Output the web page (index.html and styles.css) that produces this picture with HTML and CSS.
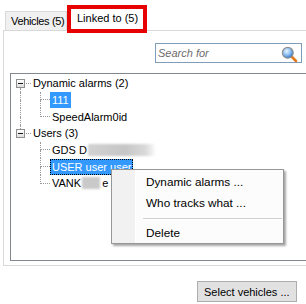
FILE: index.html
```html
<!DOCTYPE html>
<html lang="en">
<head>
    <meta charset="UTF-8">
    <title>Linked to</title>
    <link rel="stylesheet" href="styles.css">
</head>
<body>

<div class="window">
    <div class="tabs">
        <div class="tab">Vehicles (5)</div>
        <div class="tab active">Linked to (5)</div>
    </div>

    <div class="page">
        <div class="search">
            <span class="placeholder">Search for</span>
            <svg class="lens" width="17" height="17" viewBox="0 0 17 17">
                <defs>
                    <radialGradient id="glass" cx="40%" cy="35%" r="65%">
                        <stop offset="0" stop-color="#eaf4ff"/>
                        <stop offset="0.55" stop-color="#8cc0f2"/>
                        <stop offset="1" stop-color="#2f73c9"/>
                    </radialGradient>
                </defs>
                <line x1="10.5" y1="10.5" x2="15" y2="15" stroke="#e27a1c" stroke-width="2.6" stroke-linecap="round"/>
                <circle cx="6.8" cy="6.8" r="5.4" fill="url(#glass)" stroke="#8f8f8f" stroke-width="1.2"/>
            </svg>
        </div>

        <div class="tree">
            <div class="row">
                <div class="cell">
                    <div class="up"></div>
                    <div class="mid"><span class="exp"></span><span class="dash"></span></div>
                    <div class="down v"></div>
                </div>
                <span class="label">Dynamic alarms (2)</span>
            </div>
            <div class="row">
                <div class="cell"><div class="up v"></div><div class="down v"></div></div>
                <div class="cell narrow"><div class="up v h"></div><div class="down v"></div></div>
                <span class="label sel">111</span>
            </div>
            <div class="row">
                <div class="cell"><div class="up v"></div><div class="down v"></div></div>
                <div class="cell narrow"><div class="up v h"></div><div class="down"></div></div>
                <span class="label">SpeedAlarm0id</span>
            </div>
            <div class="row">
                <div class="cell">
                    <div class="up v"></div>
                    <div class="mid"><span class="exp"></span><span class="dash"></span></div>
                    <div class="down"></div>
                </div>
                <span class="label">Users (3)</span>
            </div>
            <div class="row">
                <div class="cell"></div>
                <div class="cell narrow"><div class="up v h"></div><div class="down v"></div></div>
                <span class="label">GDS D<span class="smudge wide"></span></span>
            </div>
            <div class="row">
                <div class="cell"></div>
                <div class="cell narrow"><div class="up v h"></div><div class="down v"></div></div>
                <span class="label sel focus">USER user user</span>
            </div>
            <div class="row">
                <div class="cell"></div>
                <div class="cell narrow"><div class="up v h"></div><div class="down"></div></div>
                <span class="label">VANK<span class="smudge"></span>e</span>
            </div>
        </div>
    </div>

    <button class="select-btn">Select vehicles ...</button>
</div>

<div class="menu">
    <div class="menu-item">Dynamic alarms ...</div>
    <div class="menu-item">Who tracks what ...</div>
    <div class="menu-sep"></div>
    <div class="menu-item">Delete</div>
</div>

</body>
</html>
```

FILE: styles.css
```css
body {
    margin: 0;
    width: 306px;
    height: 304px;
    overflow: hidden;
    position: relative;
    background: #fff;
    font-family: "Liberation Sans", Arial, sans-serif;
    font-size: 11px;
    color: #000;
}

.window {
    padding: 5px 0 0 3px;
}

.tabs {
    display: flex;
    align-items: flex-end;
    height: 25px;
    padding-left: 2px;
}

.tab {
    box-sizing: border-box;
    display: flex;
    align-items: center;
    width: 62px;
    height: 19px;
    padding: 0 0 1px 5px;
    white-space: nowrap;
    letter-spacing: -0.35px;
    background: #f0f0f0;
    border: 1px solid #d9d9d9;
    border-bottom: none;
}

.tab.active {
    position: relative;
    z-index: 1;
    width: 80px;
    height: 28px;
    margin-bottom: -3px;
    padding: 0 0 2px 6px;
    letter-spacing: 0;
    background: #fff;
    border: 4px solid #e60000;
}

.page {
    box-sizing: border-box;
    width: 303px;
    height: 236px;
    padding: 12px 0 0 6px;
    border: 1px solid #d9d9d9;
    border-right: none;
}

.search {
    box-sizing: border-box;
    display: flex;
    align-items: center;
    width: 147px;
    height: 20px;
    margin-left: 145px;
    padding: 0 3px 0 2px;
    border: 1px solid #7f9db9;
}

.placeholder {
    flex: 1;
    font-style: italic;
    color: #6d6d6d;
}

.lens {
    margin-top: 2px;
}

.tree {
    box-sizing: border-box;
    height: 188px;
    margin-top: 10px;
    padding-top: 1px;
    border: 1px solid #828790;
    border-right: none;
}

.row {
    display: flex;
    height: 16.67px;
}

.cell {
    display: flex;
    flex-direction: column;
    width: 20px;
    flex-shrink: 0;
}

.cell.narrow {
    width: 19px;
}

.up, .down {
    flex: 1;
    margin-left: 9px;
}

.v {
    border-left: 1px dotted #9a9a9a;
}

.h {
    border-bottom: 1px dotted #9a9a9a;
}

.mid {
    display: flex;
    align-items: center;
    height: 9px;
}

.exp {
    box-sizing: border-box;
    display: flex;
    align-items: center;
    justify-content: center;
    width: 9px;
    height: 9px;
    margin-left: 5px;
    border: 1px solid #8e8f8f;
    background: linear-gradient(#fff, #dedede);
}

.exp::before {
    content: "";
    width: 5px;
    height: 1px;
    background: #1a1a1a;
}

.dash {
    flex: 1;
    margin-left: 1px;
    border-top: 1px dotted #9a9a9a;
}

.label {
    box-sizing: border-box;
    display: inline-flex;
    align-items: center;
    align-self: center;
    height: 16px;
    padding: 0 2px;
    white-space: nowrap;
}

.sel {
    background: #3399ff;
    color: #fff;
}

.focus {
    outline: 1px dotted #000;
    outline-offset: -1px;
}

.smudge {
    display: inline-block;
    width: 18px;
    height: 12px;
    margin: 0 2px 0 1px;
    background: #c9c9c9;
    filter: blur(1px);
}

.smudge.wide {
    width: 68px;
    background: linear-gradient(to right, #d2d2d2, #c6c6c6 55%, #dadada 85%, rgba(255, 255, 255, 0));
}

.select-btn {
    display: block;
    box-sizing: border-box;
    width: 100px;
    height: 21px;
    margin: 15px 0 0 194px;
    padding: 0 0 0 6px;
    text-align: left;
    font-family: inherit;
    font-size: 11px;
    color: #000;
    background: #e1e1e1;
    border: 1px solid #adadad;
    border-radius: 0;
}

.menu {
    position: absolute;
    left: 111px;
    top: 169px;
    box-sizing: border-box;
    width: 173px;
    height: 75px;
    padding-top: 1px;
    border: 1px solid #979797;
    background: linear-gradient(to right, #f1f1f1 0, #f1f1f1 23px, #fff 23px, #fff 24px, #fcfcfc 24px);
    box-shadow: 2px 2px 2px rgba(0, 0, 0, 0.35);
    font-size: 11.75px;
}

.menu-item {
    height: 21px;
    line-height: 21px;
    padding-left: 34px;
}

.menu-sep {
    height: 1px;
    margin: 5px 1px 2px 31px;
    background: #d0d0d0;
    border-bottom: 1px solid #fff;
}
```
